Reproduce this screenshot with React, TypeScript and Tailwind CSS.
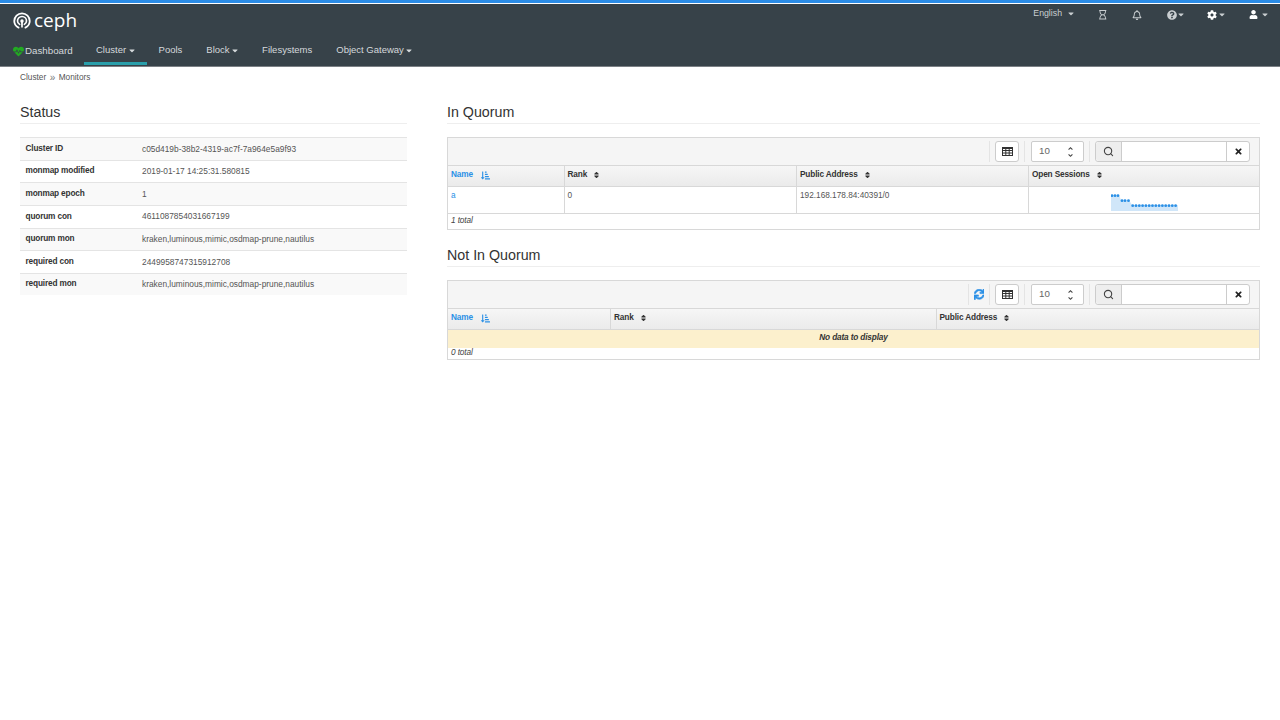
import React from "react";
import { FaCaretDown, FaSort, FaSortAmountDownAlt, FaTimes, FaSync, FaRegBell, FaRegHourglass, FaQuestionCircle, FaCog, FaUser, FaHeartbeat, FaAngleUp, FaAngleDown } from "react-icons/fa";
import { Search } from "lucide-react";

const Caret = ({ className = "" }: { className?: string }) => <FaCaretDown className={`inline-block text-[9px] w-[6px] shrink-0 ${className}`} />;

const Logo = () => (
  <svg width="18" height="18" viewBox="0 0 20 20" fill="none" stroke="#fff" strokeLinecap="round" className="shrink-0">
    <path d="M6.2 17.4C3.2 16 1.4 13.300 1.4 10.100 1.4 5.300 5.200 1.500 10 1.500s8.600 3.800 8.600 8.600c0 3.200-1.800 5.900-4.800 7.300" strokeWidth="2" />
    <path d="M7.400 13.800C6 12.900 5 11.500 5 9.900 5 7.200 7.200 5 10 5s5 2.200 5 4.900c0 1.600-1 3-2.400 3.900" strokeWidth="1.800" />
    <path d="M10 8a1.900 1.900 0 0 1 1.900 1.900c0 .9-.5 1.400-.9 2.100l-.1 5.200H9.100L9 12c-.4-.7-.9-1.200-.9-2.100A1.900 1.900 0 0 1 10 8z" fill="#fff" stroke="none" />
  </svg>
);

const NavItem = ({ label, caret, active }: { label: string; caret?: boolean; active?: boolean }) => (
  <div className={`h-[30px] px-3 pt-[3px] flex items-center gap-[2.5px] text-[9.5px] text-[#d5d9dc] border-b-[3px] ${active ? "border-[#2a9fab]" : "border-transparent"}`}>
    <span>{label}</span>
    {caret && <Caret />}
  </div>
);

const statusRows = [
  ["Cluster ID", "c05d419b-38b2-4319-ac7f-7a964e5a9f93"],
  ["monmap modified", "2019-01-17 14:25:31.580815"],
  ["monmap epoch", "1"],
  ["quorum con", "4611087854031667199"],
  ["quorum mon", "kraken,luminous,mimic,osdmap-prune,nautilus"],
  ["required con", "2449958747315912708"],
  ["required mon", "kraken,luminous,mimic,osdmap-prune,nautilus"],
];

const Heading = ({ children }: { children: React.ReactNode }) => (
  <h2 className="text-[14.25px] leading-[17px] pt-[1px] text-[#333] border-b border-[#eee] h-[21px]">{children}</h2>
);

const GridIcon = () => (
  <svg width="11" height="9" viewBox="0 0 11 9" fill="none" stroke="#333" strokeWidth="1">
    <rect x="0.5" y="0.5" width="10" height="8" />
    <path d="M0.5 1.500H10.500M0.500 3.500H10.500M0.500 6H10.500M3.800 0.500V8.500M7.200 0.500V8.500" />
  </svg>
);

const Toolbar = ({ refresh }: { refresh?: boolean }) => (
  <div className="h-[28px] bg-[#f5f5f5] border-b border-[#d8d8d8] flex items-center justify-end pr-[9px] text-[#555]">
    {refresh && (
      <div className="flex items-center h-[21px] px-[5px] border-l border-[#e4e4e4]">
        <FaSync className="text-[10.5px] text-[#2b90e6]" stroke="currentColor" strokeWidth={30} />
      </div>
    )}
    <div className="flex items-center h-[21px] border-l border-r border-[#e4e4e4] px-[5px] mr-[6px]">
      <div className="w-[24px] h-[21px] bg-white border border-[#ccc] rounded-[3px] flex items-center justify-center">
        <GridIcon />
      </div>
    </div>
    <div className="w-[53px] h-[21px] bg-white border border-[#ccc] rounded-[2px] flex items-center justify-between pl-[7px] pr-[9px] text-[9.75px] text-[#666]">
      <span>10</span>
      <span className="flex flex-col text-[7px] text-[#444] leading-none">
        <FaAngleUp />
        <FaAngleDown />
      </span>
    </div>
    <div className="h-[21px] border-l border-[#e4e4e4] ml-[5px] mr-[5px]" />
    <div className="flex h-[21px] w-[155px] border border-[#ccc] rounded-[3px] bg-white">
      <div className="w-[26px] bg-[#eee] border-r border-[#ccc] flex items-center justify-center rounded-l-[3px]">
        <Search size={11} strokeWidth={2.4} className="text-[#444]" />
      </div>
      <div className="flex-1" />
      <div className="w-[23px] border-l border-[#ccc] flex items-center justify-center">
        <FaTimes className="text-[9px] text-[#222]" />
      </div>
    </div>
  </div>
);

const Th = ({ label, sorted, w, last }: { label: string; sorted?: boolean; w: string; last?: boolean }) => (
  <div className={`${w} h-full flex items-center pl-[3px] pb-[2px] ${sorted ? "gap-[8px]" : "gap-[7px]"} text-[8.25px] tracking-[-0.15px] font-bold ${last ? "" : "border-r border-[#d8d8d8]"} ${sorted ? "text-[#2b90e6]" : "text-[#333]"}`}>
    <span>{label}</span>
    {sorted ? <FaSortAmountDownAlt className="text-[9px]" /> : <FaSort className="text-[8px] w-[5px]" />}
  </div>
);

const Spark = () => {
  const pts: [number, number][] = [];
  [1, 4, 7].forEach((x) => pts.push([x, 1.7]));
  [11, 14, 17.5].forEach((x) => pts.push([x, 6.7]));
  for (let x = 21.7; x < 67; x += 3.3) pts.push([x, 11.7]);
  return (
    <svg width="67" height="17" viewBox="0 0 67 17">
      <path d="M0 1H8L10 6H18L21 11H67V17H0Z" fill="#d0e6f9" />
      {pts.map(([x, y], i) => <circle key={i} cx={x} cy={y} r="1.4" fill="#2b90e6" />)}
    </svg>
  );
};

export default function App() {
  return (
    <div className="min-h-[720px] bg-white text-[#333]" style={{ fontFamily: '"Liberation Sans", Arial, sans-serif' }}>
      <header className="h-[67px] bg-[#374249] border-t-[3px] border-[#2b8ce6] border-b border-b-[#7b8085] flex flex-col justify-between shadow-[inset_0_1px_0_#fff]">
        <div className="flex justify-between h-[33px]">
          <div className="flex items-center pl-[13px] pt-[3px] gap-[3px]">
            <Logo />
            <span className="text-white text-[19px] leading-none mt-[-1px]" style={{ fontFamily: '"Open Sans", sans-serif' }}>ceph</span>
          </div>
          <div className="flex items-start text-[#c9ced1] pt-[4px] pr-[12px] h-[20px]">
            <span className="text-[8.75px] leading-[12px]">English</span>
            <Caret className="ml-[6px] mt-[2px]" />
            <FaRegHourglass className="text-[9.5px] ml-[24.25px] mt-[3px]" />
            <FaRegBell className="text-[10px] ml-[24.25px] mt-[3px]" />
            <FaQuestionCircle className="text-[10px] ml-[25px] mt-[3px]" />
            <Caret className="ml-[1px] mt-[3px]" />
            <FaCog className="text-[10px] ml-[23px] mt-[3px] text-white" />
            <Caret className="ml-[2px] mt-[3px]" />
            <FaUser className="text-[9px] ml-[23.5px] mt-[3px] text-white" />
            <Caret className="ml-[4.5px] mt-[3px]" />
          </div>
        </div>
        <nav className="flex items-center mb-[1px]">
          <div className="h-[30px] w-[84px] pl-[13px] pt-[3px] flex items-center gap-[1px] text-[9.75px] text-[#d5d9dc]">
            <FaHeartbeat className="text-[11px] text-[#22aa22]" />
            <span>Dashboard</span>
          </div>
          <NavItem label="Cluster" caret active />
          <NavItem label="Pools" />
          <NavItem label="Block" caret />
          <NavItem label="Filesystems" />
          <NavItem label="Object Gateway" caret />
        </nav>
      </header>

      <div className="px-5 h-[20px] pt-[2px] flex items-center text-[8.25px] text-[#555]">
        <span>Cluster</span>
        <span className="mx-[3.5px] text-[10px] leading-[10px] text-[#777]">»</span>
        <span>Monitors</span>
      </div>

      <main className="px-5 pt-[16px] grid grid-cols-[387px_813px] gap-x-10 items-start">
        <section>
          <Heading>Status</Heading>
          <div className="mt-[13px]">
            {statusRows.map(([k, v], i) => (
              <div key={k} className={`h-[22.65px] flex items-center border-t border-[#e4e4e4] pl-[5.5px] ${i % 2 === 0 ? "bg-[#f9f9f9]" : "bg-white"}`}>
                <span className="w-[116.5px] text-[8.25px] tracking-[-0.15px] font-bold text-[#333]">{k}</span>
                <span className="text-[8.35px] text-[#555]">{v}</span>
              </div>
            ))}
          </div>
        </section>

        <section>
          <Heading>In Quorum</Heading>
          <div className="mt-[13px] border border-[#d8d8d8]">
            <Toolbar />
            <div className="h-[21px] flex border-b border-[#d8d8d8] bg-gradient-to-b from-[#f6f6f6] to-[#ebebeb]">
              <Th label="Name" sorted w="w-[116.5px]" />
              <Th label="Rank" w="w-[232.5px]" />
              <Th label="Public Address" w="w-[232px]" />
              <Th label="Open Sessions" w="flex-1" last />
            </div>
            <div className="h-[27px] flex border-b border-[#d8d8d8] text-[8.25px]">
              <div className="w-[116.5px] pl-[3px] pt-[3px] border-r border-[#d8d8d8] text-[#2b90e6]">a</div>
              <div className="w-[232.5px] pl-[3px] pt-[3px] border-r border-[#d8d8d8] text-[#555]">0</div>
              <div className="w-[232px] pl-[3px] pt-[3px] border-r border-[#d8d8d8] text-[#555]">192.168.178.84:40391/0</div>
              <div className="flex-1 flex justify-center pt-[7px] pl-[1px]"><Spark /></div>
            </div>
            <div className="h-[15px] flex items-center pl-[3px] text-[8.25px] tracking-[-0.1px] italic text-[#444]">1 total</div>
          </div>

          <div className="mt-[16px]"><Heading>Not In Quorum</Heading></div>
          <div className="mt-[13px] border border-[#d8d8d8]">
            <Toolbar refresh />
            <div className="h-[21px] flex border-b border-[#d8d8d8] bg-gradient-to-b from-[#f6f6f6] to-[#ebebeb]">
              <Th label="Name" sorted w="w-[163px]" />
              <Th label="Rank" w="w-[325.5px]" />
              <Th label="Public Address" w="flex-1" last />
            </div>
            <div className="h-[18px] pb-[1px] bg-[#fcf0cd] flex items-center justify-center text-[8.25px] tracking-[-0.15px] font-bold italic text-[#333]">No data to display</div>
            <div className="h-[11px] flex items-center pl-[3px] text-[8.25px] tracking-[-0.1px] italic text-[#444]">0 total</div>
          </div>
        </section>
      </main>
    </div>
  );
}
